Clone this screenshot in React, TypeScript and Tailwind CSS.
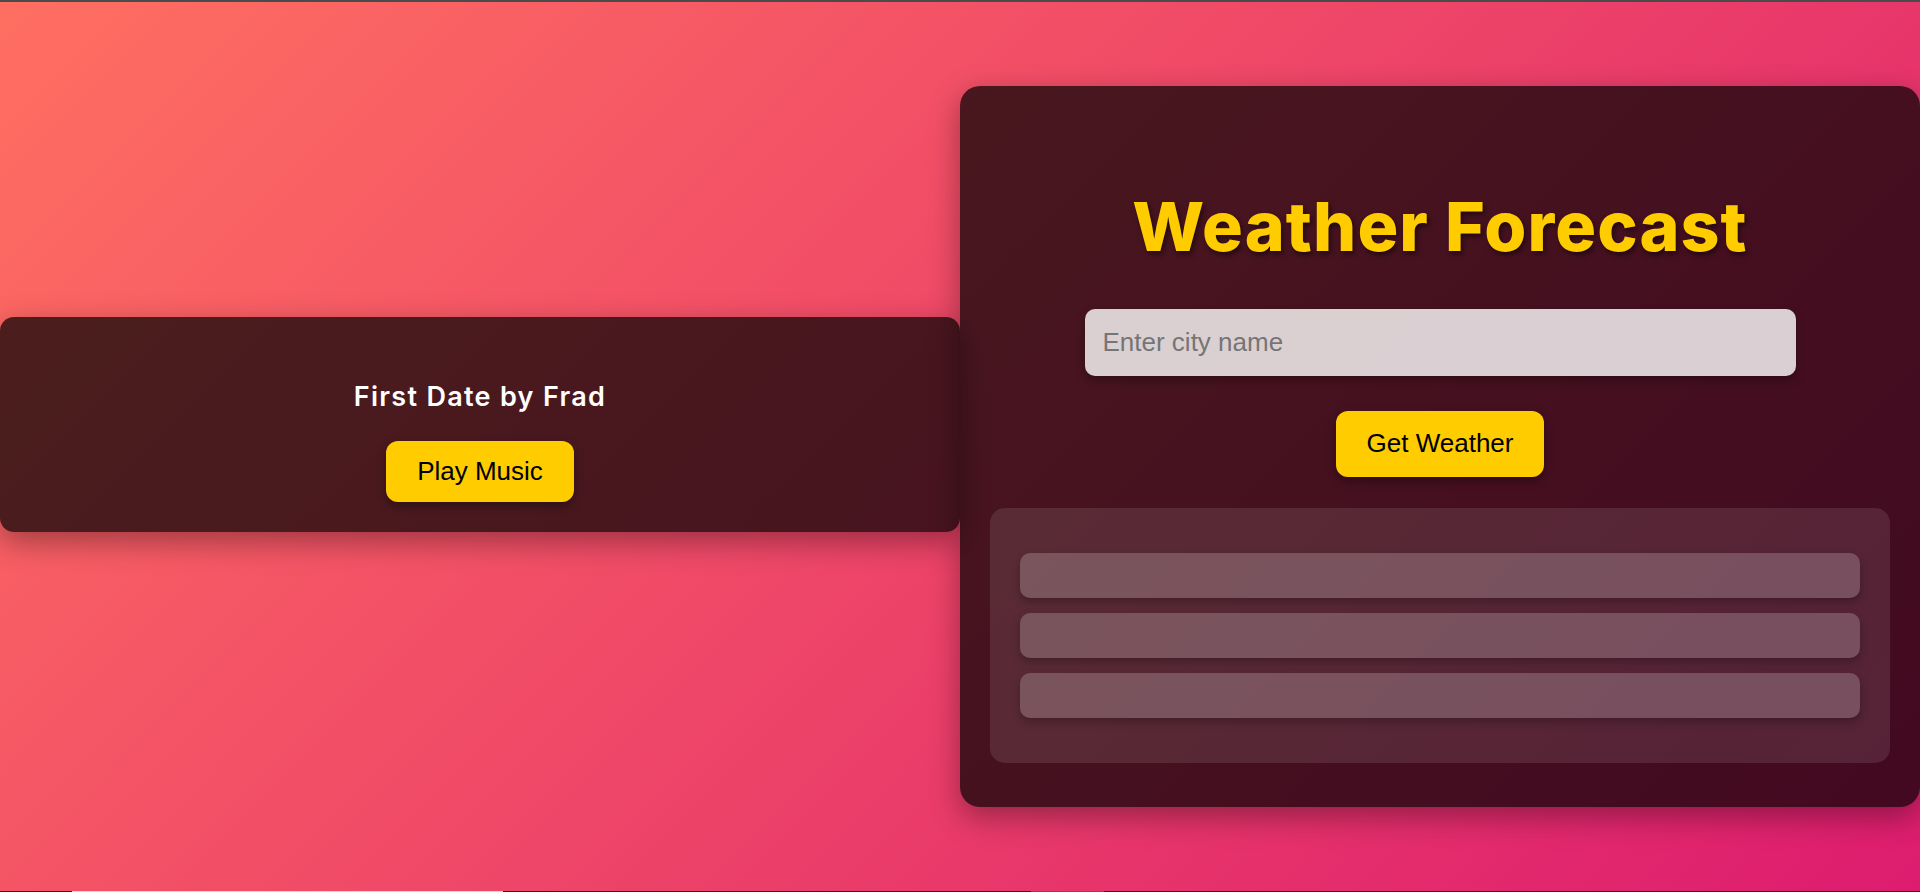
const rows = [1, 2, 3];

const MusicCard = () => {
  return (
    <div className="flex h-[215px] w-[960px] flex-col items-center mb-[44px] rounded-[14px] bg-black/70 pt-[66px] pb-[30px] shadow-[0_10px_30px_rgba(0,0,0,0.35)]">
      <h2 className="font-['Inter',sans-serif] text-[27px] font-semibold leading-none tracking-[1.3px] text-white">
        First Date by Frad
      </h2>
      <button className="mt-[31px] flex h-[61px] items-center rounded-[12px] bg-[#ffcc00] px-[31px] font-['Liberation_Sans',Arial,sans-serif] text-[26px] text-black shadow-[0_4px_10px_rgba(0,0,0,0.35)]">
        Play Music
      </button>
    </div>
  );
};

const WeatherCard = () => {
  return (
    <div className="flex w-[960px] flex-col items-center rounded-[20px] bg-black/70 px-[30px] pt-[106px] pb-[44px] shadow-[0_10px_30px_rgba(0,0,0,0.35)]">
      <h1 className="font-['Inter',sans-serif] text-[68px] font-extrabold leading-none tracking-[1.1px] text-[#ffcc00] [text-shadow:2px_3px_5px_rgba(0,0,0,0.5)]">
        Weather Forecast
      </h1>
      <input
        type="text"
        placeholder="Enter city name"
        className="mt-[48.6px] h-[67px] w-[711px] rounded-[10px] bg-white/80 pl-[18px] font-['Liberation_Sans',Arial,sans-serif] text-[26px] text-black outline-none shadow-[0_4px_10px_rgba(0,0,0,0.3)] placeholder:text-[#757575]"
      />
      <button className="mt-[35px] flex h-[66px] items-center rounded-[12px] bg-[#ffcc00] px-[31px] font-['Liberation_Sans',Arial,sans-serif] text-[26px] text-black shadow-[0_4px_10px_rgba(0,0,0,0.35)]">
        Get Weather
      </button>
      <div className="mt-[31px] flex w-full flex-col gap-[15px] rounded-[15px] bg-white/10 px-[30px] py-[45px]">
        {rows.map((r) => (
          <div key={r} className="h-[45px] rounded-[10px] bg-white/20 shadow-[0_4px_8px_rgba(0,0,0,0.25)]" />
        ))}
      </div>
    </div>
  );
};

export default function App() {
  return (
    <div className="flex h-[892px] w-full flex-col overflow-hidden bg-[linear-gradient(135deg,#ff6f61,#dd1c6f)]">
      <div className="h-[2px] w-full bg-[#4b4b4b]" />
      <main className="flex flex-1 items-center">
        <MusicCard />
        <WeatherCard />
      </main>
      <div className="flex h-[1px] w-full bg-[#202020]">
        <div className="ml-[72px] w-[431px] bg-[#dcdcdc]" />
        <div className="ml-[528px] w-[73px] bg-[#5c5c5c]" />
      </div>
    </div>
  );
}
